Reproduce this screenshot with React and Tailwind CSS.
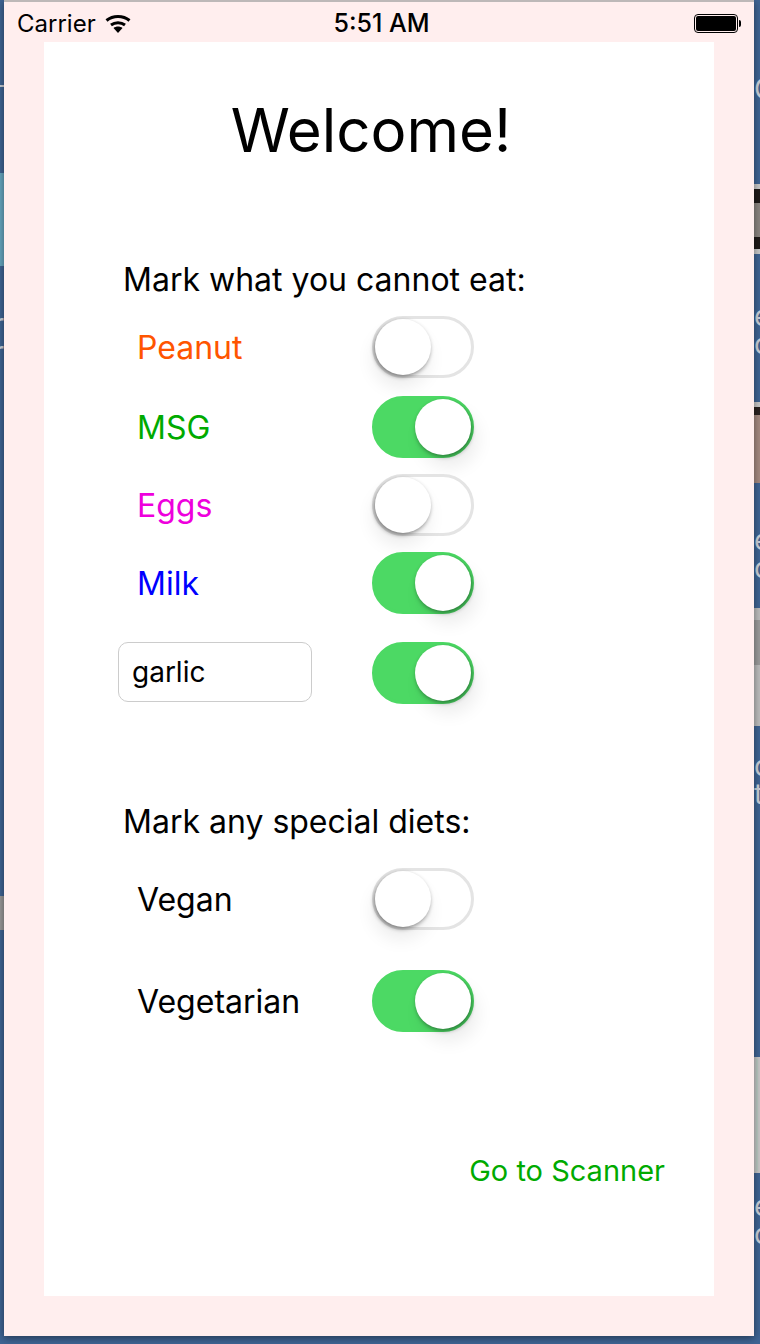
import { useState } from 'react';

const green = 'text-[#00aa00]';
const fragment = 'h-[28px] overflow-hidden text-[28px] leading-[28px] text-[#ccd3dc]';

function Toggle({ initial }) {
  const [on, setOn] = useState(initial);
  return (
    <button
      onClick={() => setOn(!on)}
      className={`flex h-[62px] w-[102px] shrink-0 items-center rounded-full border-[3px] ${
        on ? 'justify-end border-[#4cd964] bg-[#4cd964]' : 'justify-start border-[#e4e4e4] bg-white'
      }`}
    >
      <span
        className={`h-[56px] w-[56px] rounded-full bg-white ${
          on
            ? 'shadow-[1px_2px_4px_rgba(0,0,0,0.38),6px_12px_18px_rgba(0,0,0,0.08)]'
            : 'shadow-[-1px_2px_4px_rgba(0,0,0,0.42),-2px_12px_18px_rgba(0,0,0,0.08)]'
        }`}
      />
    </button>
  );
}

function Row({ label, color, on, className }) {
  return (
    <div className={`flex items-center ${className}`}>
      <div className={`w-[254px] pl-[19px] pt-[2px] text-[32px] leading-[60px] ${color}`}>{label}</div>
      <Toggle initial={on} />
    </div>
  );
}

function Wifi() {
  return (
    <svg width="26" height="20" viewBox="0 0 26 20" fill="none" stroke="black" strokeWidth="3">
      <path d="M1.500 6.500C8 1 18 1 24.500 6.500" />
      <path d="M6 11c4-3 10-3 14 0" />
      <path d="M13 19l-4.500-5c2.500-2 6.500-2 9 0z" fill="black" stroke="none" />
    </svg>
  );
}

function Battery() {
  return (
    <div className="flex items-center">
      <div className="h-[19px] w-[44px] rounded-[4px] border border-black p-[1px]">
        <div className="h-full w-full rounded-[2px] bg-black" />
      </div>
      <div className="ml-[1px] h-[7px] w-[2px] rounded-r-sm bg-black" />
    </div>
  );
}

function LeftStrip() {
  return (
    <div className="flex w-[4px] flex-col">
      <div className="mt-[85px] h-[2px] bg-[#c9ced6]" />
      <div className="mt-[86px] h-[93px] bg-[#66a6c0]" />
      <div className={`mt-[44px] flex justify-end ${fragment}`}>r</div>
      <div className={`flex justify-end ${fragment}`}>r</div>
      <div className="mt-[530px] h-[34px] bg-[#999999]" />
    </div>
  );
}

function RightStrip() {
  return (
    <div className="flex w-[6px] flex-col">
      <div className={`mt-[75px] ${fragment}`}>C</div>
      <div className="mt-[81px] h-[70px] border-y-[5px] border-[#c8c8c8] bg-[#1f1a18] pt-[14px]">
        <div className="h-[34px] bg-[#8b8580]" />
      </div>
      <div className={`mt-[48px] ${fragment}`}>e</div>
      <div className={fragment}>o</div>
      <div className="mt-[44px] h-[81px] border-t-[5px] border-[#c8c8c8] bg-[#a58a80]">
        <div className="h-[8px] bg-[#2a2220]" />
      </div>
      <div className={`mt-[43px] ${fragment}`}>e</div>
      <div className={fragment}>o</div>
      <div className="mt-[26px] h-[118px] bg-[#bdbdbd] pt-[12px]">
        <div className="h-[45px] bg-[#9c9c9c]" />
      </div>
      <div className={`mt-[26px] ${fragment}`}>c</div>
      <div className={fragment}>ti</div>
      <div className="mt-[249px] h-[116px] border-2 border-[#c8c8c8] bg-[#bccbc4]" />
      <div className={`mt-[19px] ${fragment}`}>e</div>
      <div className={fragment}>o</div>
    </div>
  );
}

export default function App() {
  return (
    <div className="flex h-[1344px] w-[760px] items-start overflow-hidden bg-[#3f6494] font-['Inter',sans-serif] text-black">
      <LeftStrip />
      <div className="relative z-10 h-[1336px] w-[750px] border-t-2 border-[#bdb8b8] bg-[#ffeeee] shadow-[0_2px_8px_rgba(0,0,0,0.45)]">
        <div className="flex h-[40px] items-center justify-between pl-[13px] pr-[13px] pt-[3px] text-[24px]">
          <div className="flex w-[200px] items-center gap-[9px]">
            <span>Carrier</span>
            <Wifi />
          </div>
          <span className="ml-[5px] text-[25px] font-medium">5:51 AM</span>
          <div className="flex w-[200px] justify-end">
            <Battery />
          </div>
        </div>
        <div className="ml-[40px] h-[1254px] w-[670px] bg-white pl-[74px]">
          <h1 className="pr-[90px] pt-[49px] text-center text-[60px] leading-[78px]">Welcome!</h1>
          <div className="mt-[91px] pl-[5px] text-[32px] leading-[40px]">Mark what you cannot eat:</div>
          <Row label="Peanut" color="text-[#ff5500]" className="mt-[16px]" />
          <Row label="MSG" color={green} on className="mt-[18px]" />
          <Row label="Eggs" color="text-[#ee00dd]" className="mt-[16px]" />
          <Row label="Milk" color="text-[#0000ff]" on className="mt-[16px]" />
          <div className="mt-[28px] flex items-start">
            <input
              defaultValue="garlic"
              className="h-[60px] w-[194px] rounded-[10px] border border-[#cccccc] px-[13px] text-[28px] outline-none"
            />
            <div className="ml-[60px]">
              <Toggle initial />
            </div>
          </div>
          <div className="mt-[98px] pl-[5px] text-[32px] leading-[40px]">Mark any special diets:</div>
          <Row label="Vegan" color="text-black" className="mt-[26px]" />
          <Row label="Vegetarian" color="text-black" on className="mt-[40px]" />
          <div className={`mt-[119px] pr-[49px] text-right text-[29px] leading-[40px] ${green}`}>Go to Scanner</div>
        </div>
      </div>
      <RightStrip />
    </div>
  );
}
